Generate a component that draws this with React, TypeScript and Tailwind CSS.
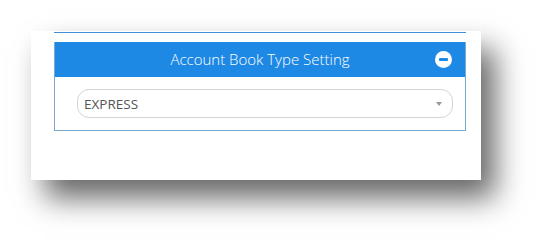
export default function App() {
  return (
    <div className="w-[546px] h-[245px] bg-white overflow-hidden pl-[31px] pt-[31px] font-['Open_Sans',sans-serif]">
      <div className="w-[450px] h-[149px] bg-white shadow-[14px_18px_28px_rgba(0,0,0,0.6)] pl-[23px] pr-[15px] pt-[1px]">
        {/* bottom edge of the previous panel */}
        <div className="h-px bg-[#3f8fd9]" />

        <div className="mt-[9px] border border-t-0 border-[#7aa9cf]">
          <div className="relative h-[35px] bg-[#1e88e5] flex items-center justify-center">
            <span className="text-white text-[15px] font-light">
              Account Book Type Setting
            </span>
            <span className="absolute right-[13px] top-[9px] w-[17px] h-[17px] rounded-full bg-white flex items-center justify-center">
              <span className="w-[9px] h-[3px] bg-[#1e88e5] rounded-[1px]" />
            </span>
          </div>

          <div className="pl-[22px] pr-[12px] pt-[12px] pb-[12px]">
            <div className="h-[29px] rounded-[12px] border border-[#d4d4d4] flex items-center justify-between pl-[6px] pr-[10px]">
              <span className="text-[13.5px] text-[#555] pt-px">EXPRESS</span>
              <span className="w-0 h-0 border-l-[3.5px] border-r-[3.5px] border-t-[4px] border-l-transparent border-r-transparent border-t-[#999]" />
            </div>
          </div>
        </div>
      </div>
    </div>
  );
}
